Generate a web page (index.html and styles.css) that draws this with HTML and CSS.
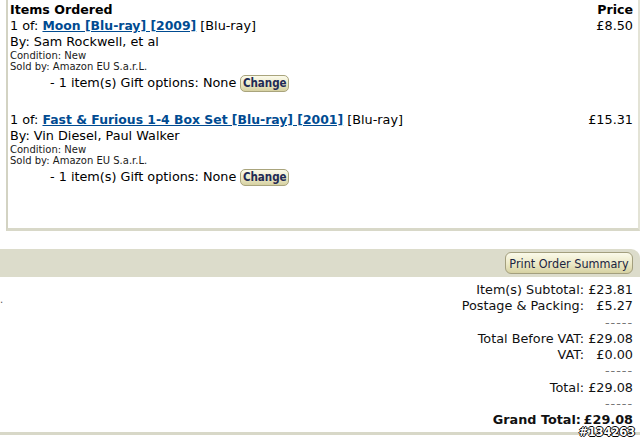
FILE: index.html
```html
<!DOCTYPE html>
<html>
<head>
<meta charset="utf-8">
<link rel="stylesheet" href="styles.css">
</head>
<body>
<div class="page">
  <section class="items">
    <div class="items-head">
      <span>Items Ordered</span>
      <span>Price</span>
    </div>
    <div class="item">
      <div class="item-main">
        <div class="line">1 of: <a class="title" href="#">Moon [Blu-ray] [2009]</a> [Blu-ray]</div>
        <div class="line">By: Sam Rockwell, et al</div>
        <div class="small">Condition: New</div>
        <div class="small">Sold by: Amazon EU S.a.r.L.</div>
        <div class="gift">- 1 item(s) Gift options: None <button class="btn btn-small">Change</button></div>
      </div>
      <div class="price">£8.50</div>
    </div>
    <div class="item">
      <div class="item-main">
        <div class="line">1 of: <a class="title" href="#">Fast &amp; Furious 1-4 Box Set [Blu-ray] [2001]</a> [Blu-ray]</div>
        <div class="line">By: Vin Diesel, Paul Walker</div>
        <div class="small">Condition: New</div>
        <div class="small">Sold by: Amazon EU S.a.r.L.</div>
        <div class="gift">- 1 item(s) Gift options: None <button class="btn btn-small">Change</button></div>
      </div>
      <div class="price">£15.31</div>
    </div>
  </section>

  <section class="summary">
    <div class="bar">
      <button class="btn btn-print">Print Order Summary</button>
    </div>
    <div class="totals-wrap">
      <span class="stray">.</span>
      <div class="totals">
        <div class="row"><span class="lbl">Item(s) Subtotal:</span><span class="val">£23.81</span></div>
        <div class="row"><span class="lbl">Postage &amp; Packing:</span><span class="val">£5.27</span></div>
        <div class="row"><span class="val dash">-----</span></div>
        <div class="row"><span class="lbl">Total Before VAT:</span><span class="val">£29.08</span></div>
        <div class="row"><span class="lbl">VAT:</span><span class="val">£0.00</span></div>
        <div class="row"><span class="val dash">-----</span></div>
        <div class="row"><span class="lbl">Total:</span><span class="val">£29.08</span></div>
        <div class="row"><span class="val dash">-----</span></div>
        <div class="row grand"><span class="lbl">Grand Total:</span><span class="val">£29.08</span></div>
      </div>
    </div>
  </section>
  <div class="watermark">#134263</div>
</div>
</body>
</html>
```

FILE: styles.css
```css
html, body {
  margin: 0;
  padding: 0;
  background: #fff;
}
body {
  font-family: "DejaVu Sans", Verdana, sans-serif;
  font-size: 12.8px;
  color: #000;
  width: 640px;
  height: 438px;
  overflow: hidden;
}
.page {
  position: relative;
  height: 438px;
}
.items {
  margin-left: 6px;
  height: 231px;
  box-sizing: border-box;
  border-left: 2px solid #d3d3c3;
  border-right: 2px solid #e3e3d6;
  border-bottom: 3px solid #d8d8c8;
  padding: 0 5px 0 2px;
}
.items-head {
  display: flex;
  justify-content: space-between;
  font-weight: bold;
  font-size: 12.6px;
  line-height: 17px;
  padding-top: 1px;
}
.item {
  display: flex;
  justify-content: space-between;
  margin-bottom: 20px;
}
.line {
  line-height: 16px;
}
.title {
  color: #004b91;
  font-weight: bold;
  font-size: 12.4px;
  text-decoration: underline;
}
.small {
  font-size: 10px;
  line-height: 11px;
  color: #1a1a1a;
}
.gift {
  padding-left: 40px;
  margin-top: 2px;
  line-height: 18px;
  display: flex;
  align-items: center;
  gap: 4px;
}
.price {
  line-height: 16px;
}
.btn {
  font-family: "DejaVu Sans Condensed", "DejaVu Sans", sans-serif;
  font-stretch: condensed;
  font-weight: bold;
  color: #1f2a55;
  background: linear-gradient(#fbfaea, #ebe8c6 55%, #d6d1a2);
  border: 1px solid #a9a47c;
  border-radius: 5px;
  cursor: pointer;
  padding: 0;
}
.btn-small {
  font-size: 11.5px;
  height: 17px;
  width: 49px;
  line-height: 15px;
}
.summary {
  margin-top: 18px;
  border-bottom: 3px solid #d8d8c8;
  height: 186px;
  box-sizing: border-box;
}
.bar {
  height: 28px;
  background: #dcdccb;
  border-top-right-radius: 9px;
  display: flex;
  justify-content: flex-end;
  align-items: center;
  padding-right: 7px;
  box-sizing: border-box;
}
.btn-print {
  font-weight: normal;
  font-size: 12.5px;
  height: 22px;
  width: 128px;
  color: #1b2440;
  border-radius: 6px;
  border-color: #a39f7e;
}
.totals-wrap {
  display: flex;
  justify-content: space-between;
  padding: 5px 7px 0 0;
}
.stray {
  font-size: 10px;
  line-height: 16px;
  padding-top: 10px;
  color: #555;
}
.totals {
  display: flex;
  flex-direction: column;
}
.row {
  display: flex;
  justify-content: flex-end;
  line-height: 16.25px;
  color: #111;
  white-space: nowrap;
}
.val {
  width: 49px;
  display: flex;
  justify-content: flex-end;
}
.dash {
  color: #777;
  letter-spacing: 1px;
}
.grand {
  font-weight: bold;
}
.grand .val {
  width: 52px;
}
.watermark {
  position: absolute;
  right: 5px;
  bottom: -1px;
  font-family: "DejaVu Sans Condensed", "DejaVu Sans", sans-serif;
  font-weight: bold;
  font-size: 12.5px;
  line-height: 14px;
  color: #fff;
  text-shadow: -1px 0 #000, 1px 0 #000, 0 -1px #000, 0 1px #000;
}
```
